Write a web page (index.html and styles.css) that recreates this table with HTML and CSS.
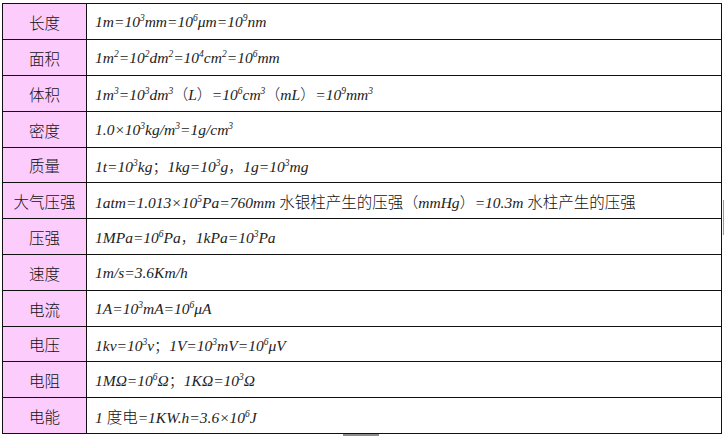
FILE: index.html
```html
<!DOCTYPE html>
<html lang="zh">
<head>
<meta charset="utf-8">
<link rel="stylesheet" href="styles.css">
</head>
<body>
<table class="units">
  <tr><td class="label">长度</td><td class="val">1m=10<sup>3</sup>mm=10<sup>6</sup>μm=10<sup>9</sup>nm</td></tr>
  <tr><td class="label">面积</td><td class="val">1m<sup>2</sup>=10<sup>2</sup>dm<sup>2</sup>=10<sup>4</sup>cm<sup>2</sup>=10<sup>6</sup>mm</td></tr>
  <tr><td class="label">体积</td><td class="val">1m<sup>3</sup>=10<sup>3</sup>dm<sup>3</sup><span class="cjp">（</span>L<span class="cjp">）</span>=10<sup>6</sup>cm<sup>3</sup><span class="cjp">（</span>mL<span class="cjp">）</span>=10<sup>9</sup>mm<sup>3</sup></td></tr>
  <tr><td class="label">密度</td><td class="val">1.0×10<sup>3</sup>kg/m<sup>3</sup>=1g/cm<sup>3</sup></td></tr>
  <tr class="short"><td class="label">质量</td><td class="val">1t=10<sup>3</sup>kg<span class="cjp">；</span>1kg=10<sup>3</sup>g<span class="cjp">，</span>1g=10<sup>3</sup>mg</td></tr>
  <tr><td class="label">大气压强</td><td class="val">1atm=1.013×10<sup>5</sup>Pa=760mm <span class="zh">水银柱产生的压强</span><span class="cjp">（</span>mmHg<span class="cjp">）</span>=10.3m <span class="zh">水柱产生的压强</span></td></tr>
  <tr><td class="label">压强</td><td class="val">1MPa=10<sup>6</sup>Pa<span class="cjp">，</span>1kPa=10<sup>3</sup>Pa</td></tr>
  <tr><td class="label">速度</td><td class="val">1m/s=3.6Km/h</td></tr>
  <tr><td class="label">电流</td><td class="val">1A=10<sup>3</sup>mA=10<sup>6</sup>μA</td></tr>
  <tr class="short"><td class="label">电压</td><td class="val">1kv=10<sup>3</sup>v<span class="cjp">；</span>1V=10<sup>3</sup>mV=10<sup>6</sup>μV</td></tr>
  <tr><td class="label">电阻</td><td class="val">1MΩ=10<sup>6</sup>Ω<span class="cjp">；</span>1KΩ=10<sup>3</sup>Ω</td></tr>
  <tr><td class="label">电能</td><td class="val">1 <span class="zh">度电</span>=1KW.h=3.6×10<sup>6</sup>J</td></tr>
</table>
<div class="scroll-v"></div>
<div class="scroll-h"></div>
</body>
</html>
```
FILE: styles.css
```css
html, body {
  margin: 0;
  padding: 0;
  background: #ffffff;
}
body {
  position: relative;
  width: 724px;
  height: 436px;
  overflow: hidden;
}
.units {
  border-collapse: collapse;
  margin: 3px 0 0 2px;
  width: 720px;
  table-layout: fixed;
}
.units tr {
  height: 36px;
}
.units tr.short {
  height: 35px;
}
.units td {
  border: 1px solid #111;
  padding: 0;
  vertical-align: middle;
  white-space: nowrap;
}
.label {
  width: 83px;
  background: #fccdfc;
  text-align: center;
  font-family: "Noto Sans CJK SC", sans-serif;
  font-weight: 300;
  font-size: 15.5px;
  color: #111;
}
.val {
  padding-left: 8px !important;
  font-family: "Liberation Serif", "Noto Sans CJK SC", serif;
  font-style: italic;
  font-size: 15.5px;
  color: #222;
}
.val sup {
  font-size: 9.5px;
  line-height: 0;
  vertical-align: 6px;
}
.zh {
  font-family: "Noto Sans CJK SC", sans-serif;
  font-style: normal;
  font-weight: 300;
  font-size: 15.5px;
  color: #111;
}
.cjp {
  font-family: "Noto Sans CJK SC", sans-serif;
  font-style: normal;
  font-weight: 300;
  font-size: 15px;
}
.scroll-v {
  position: absolute;
  left: 723px;
  top: 200px;
  width: 1px;
  height: 35px;
  background: #9a9a9a;
}
.scroll-h {
  position: absolute;
  left: 343px;
  top: 434px;
  width: 36px;
  height: 2px;
  background: #8a8a8a;
}
```
